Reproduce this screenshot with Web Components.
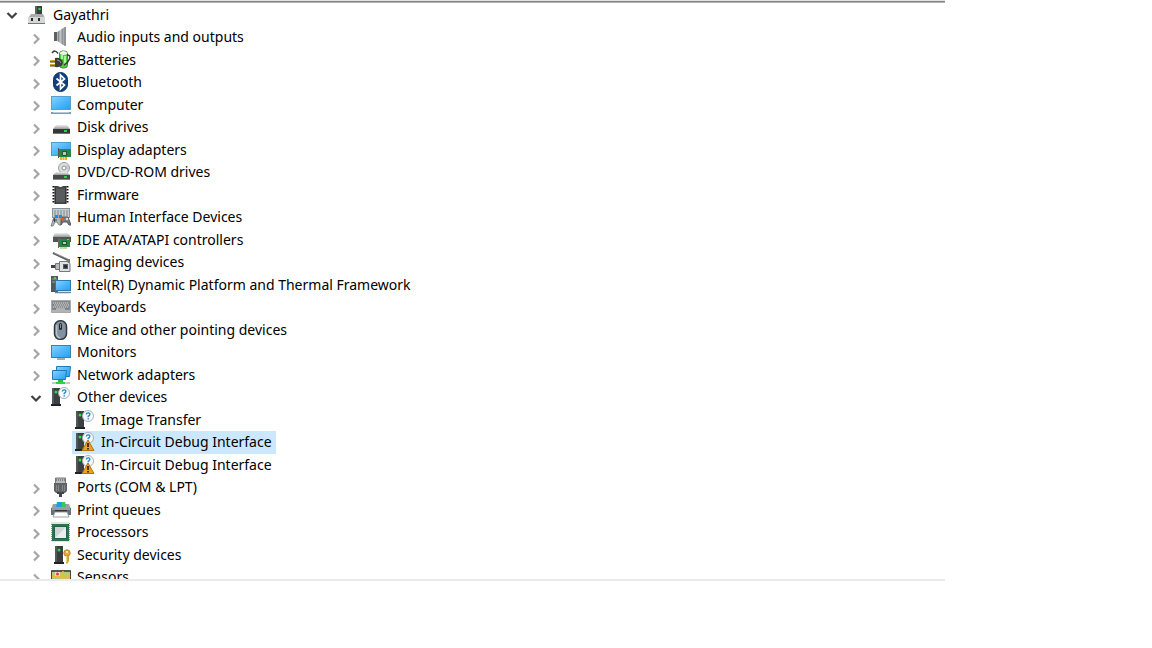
<!DOCTYPE html>
<html lang="en">
<head>
<meta charset="UTF-8">
<meta name="viewport" content="width=device-width, initial-scale=1">
<title>Device Manager</title>
<style>
  body {
    margin: 0;
    background: #fff;
    color: #000;
    font-family: "Noto Sans", "Open Sans", sans-serif;
    font-size: 14px;
  }
</style>
</head>
<body>

<device-tree>
  <device-row icon="root" level="0" open>Gayathri</device-row>
  <device-row icon="audio">Audio inputs and outputs</device-row>
  <device-row icon="battery">Batteries</device-row>
  <device-row icon="bluetooth">Bluetooth</device-row>
  <device-row icon="computer">Computer</device-row>
  <device-row icon="disk">Disk drives</device-row>
  <device-row icon="display">Display adapters</device-row>
  <device-row icon="dvd">DVD/CD-ROM drives</device-row>
  <device-row icon="firmware">Firmware</device-row>
  <device-row icon="hid">Human Interface Devices</device-row>
  <device-row icon="ide">IDE ATA/ATAPI controllers</device-row>
  <device-row icon="imaging">Imaging devices</device-row>
  <device-row icon="thermal">Intel(R) Dynamic Platform and Thermal Framework</device-row>
  <device-row icon="keyboard">Keyboards</device-row>
  <device-row icon="mouse">Mice and other pointing devices</device-row>
  <device-row icon="monitor">Monitors</device-row>
  <device-row icon="network">Network adapters</device-row>
  <device-row icon="other" open>Other devices</device-row>
  <device-row icon="other" level="2">Image Transfer</device-row>
  <device-row icon="warning" level="2" selected>In-Circuit Debug Interface</device-row>
  <device-row icon="warning" level="2">In-Circuit Debug Interface</device-row>
  <device-row icon="ports">Ports (COM &amp; LPT)</device-row>
  <device-row icon="printer">Print queues</device-row>
  <device-row icon="cpu">Processors</device-row>
  <device-row icon="security">Security devices</device-row>
  <device-row icon="sensors">Sensors</device-row>
</device-tree>

<script>
// shared pieces
const BLUE = `<linearGradient id="b" x2="1" y2="1"><stop stop-color="#8ad4ff"/><stop offset=".5" stop-color="#50b7fa"/><stop offset="1" stop-color="#289ff0"/></linearGradient>`;
const GREY = `<linearGradient id="g" x2="0" y2="1"><stop stop-color="#eee"/><stop offset="1" stop-color="#999"/></linearGradient>`;
const TOWER = `
  <path d="M2 1h8v16H2z" fill="#3d4043"/><path d="M2 1h2v16H2z" fill="#53575a"/>
  <path d="M1 17h10v2H1z" fill="#222"/><circle cx="6" cy="5" r="1.500" fill="#24e838"/>`;
const BUBBLE = `
  <circle cx="14" cy="6" r="5.500" fill="#f7fafc" stroke="#a9b0b5"/>
  <path d="M12.300 4.500q.2-1.800 2-1.700 1.900.2 1.500 1.900-.2 1-1.600 1.600v1" fill="none" stroke="#2082cc" stroke-width="1.300"/>
  <path d="M13.500 8.200H15v1.400h-1.500z" fill="#2082cc"/>`;

const ICONS = {
  root: `
    <path d="M9 1h7v9H9z" fill="#3b3f3d"/><path d="M9 1h2v9H9z" fill="#5d615f"/><circle cx="13.500" cy="4" r="1.300" fill="#28d83a"/>
    <path d="M5 9h12l2 4v6H2v-6z" fill="#a9abac"/><path d="M2 12h17v6H2z" fill="#d5d6d6"/><path d="M2 18h17v1H2z" fill="#777"/>
    <path d="M5 13h2v3H5zM12 13h2v3h-2z" fill="#2b2b2b"/>`,
  audio: `
    <defs><linearGradient id="a"><stop stop-color="#666"/><stop offset=".5" stop-color="#c8cacc"/><stop offset="1" stop-color="#85898c"/></linearGradient></defs>
    <path d="M4 5h3v9H4z" fill="#596066"/><path d="M7.500 5L13 1v17l-5.500-4z" fill="url(#a)"/>
    <path d="M13 1l3-1v19l-3-1z" fill="#a6abad"/><path d="M15 0v19" stroke="#777c80"/>`,
  battery: `
    <rect x="9.500" y="1" width="8" height="17" rx="3" fill="#42d52f" stroke="#637464"/>
    <path d="M10 4q3.500 2 7 0V2.500Q13.500-.5 10 2.500z" fill="#eef1ee"/><path d="M12 5v4M15 6v9" stroke="#a8f898" stroke-width="2"/>
    <path d="M2 3q3-4 6 .5M17 5q4 0 2.500 4T14 15" fill="none" stroke="#383838" stroke-width="1.500"/>
    <path d="M5 8q6-1 8 4.500-1 5.500-8 4.500z" fill="#3c3d36"/><path d="M7 10q3 0 4 3" fill="none" stroke="#999"/>
    <path d="M0 11h5M0 15h5" stroke="#d3a52b" stroke-width="2"/><path d="M0 12h5M0 16h5" stroke="#4b3b0b"/>`,
  bluetooth: `
    <rect x="3.500" y=".5" width="14" height="19" rx="7" fill="#143f7c" stroke="#0d3166"/>
    <path d="M6.500 6.500l8 6.500-4 4V3l4 4-8 6.500" fill="none" stroke="#fff" stroke-width="1.700"/>`,
  computer: `
    <defs>${BLUE}</defs><rect x="1.500" y="1.500" width="19" height="13" fill="url(#b)" stroke="#5a9fc9"/>
    <path d="M1 17h20v2H1z" fill="#7d9dac"/><path d="M3 17h16v1H3z" fill="#b4cad4"/>`,
  disk: `
    <defs>${GREY}</defs><path d="M6 8h11l3 4H3z" fill="url(#g)"/><path d="M3 12h17v5H3z" fill="#323835"/>
    <path d="M3 16h17v1H3z" fill="#777"/><path d="M14 13h3v2h-3z" fill="#22d450"/>`,
  display: `
    <defs>${BLUE}</defs><rect x="1.500" y="2.500" width="19" height="13" fill="url(#b)" stroke="#4f9dce"/>
    <path d="M8 9h13v8H8z" fill="#26864b"/><path d="M8.500 8v10" stroke="#555"/><path d="M12 11h5v5h-5z" fill="#275541"/>
    <path d="M13 12h3v3h-3z" fill="#aad6b6"/><path d="M10 17h7v3h-7z" fill="#f2ae18"/><path d="M12.500 17v3M14.500 17v3" stroke="#fff1b6" stroke-width=".6"/>`,
  dvd: `
    <defs>${GREY}</defs><circle cx="14" cy="6" r="5.500" fill="#dcdddd" stroke="#9ba0a1"/><path d="M14 6l4-4 1 6z" fill="#c2c9cc"/>
    <circle cx="14" cy="6" r="2" fill="#fff" stroke="#8e9293"/><path d="M6 10h11l3 3H3z" fill="url(#g)"/>
    <path d="M3 13h17v5H3z" fill="#464a48"/><path d="M3 17h17v1H3z" fill="#888"/><path d="M14 14h3v2h-3z" fill="#24ce4f"/>`,
  firmware: `
    <path d="M5 1h3q2.500 2 5 0h3v18H5z" fill="#45494a"/><path d="M6 3q4 2 9 0v14H6z" fill="#585c5e"/>
    <path d="M3.500 1v18M17.500 1v18" stroke="#151515" stroke-width="2" stroke-dasharray="1.500 1.500"/>
    <path d="M5 1v18M16 1v18" stroke="#222"/>`,
  hid: `
    <rect x="2.500" y="1.500" width="17" height="9" fill="#c8cdd0" stroke="#899096"/>
    <path d="M4 4h14M4 6h14M4 8h14" stroke="#7f878b" stroke-dasharray="2 1"/>
    <path d="M4 10h6l1 8H9l-2-3H5l-2 4H1z" fill="#b2b6b8" stroke="#7f8486"/>
    <path d="M12 10h6l3 8h-2l-2-3h-4l-2 3z" fill="#777b7e" stroke="#55595b"/>
    <path d="M4.500 11v4M3 13h4" stroke="#3b4345"/><path d="M5 8h3v3H5zM9 8h3v3H9z" fill="#168de8"/><circle cx="12" cy="12" r="1.500" fill="#e95b22"/>
    <circle cx="17" cy="12" r="1.300" fill="#d8dadb"/>`,
  ide: `
    <defs>${GREY}</defs><path d="M5 3h13l3 4H3z" fill="url(#g)"/><path d="M3 7h18v5H3z" fill="#515654"/>
    <path d="M8 9h12v8H8z" fill="#238745"/><path d="M8.500 8v10" stroke="#666"/><path d="M12 11h5v4h-5z" fill="#284d35"/>
    <path d="M13 12h3v2h-3z" fill="#aed8b2"/><path d="M10 17h7v2h-7z" fill="#cbd5a4"/><path d="M17 9h2v1h-2z" fill="#31ed5e"/>`,
  imaging: `
    <path d="M3 1l15 7" stroke="#555b5d" stroke-width="2"/><path d="M4 1l14 6" stroke="#bbb" stroke-width=".6"/>
    <path d="M17 7h3v4l-3-1z" fill="#777"/><path d="M1 13h5v3H1z" fill="#3e4547"/><path d="M5.500 11.500h5v6h-5z" fill="#bbb" stroke="#777"/>
    <path d="M9.500 9.500H17l3 2v8H9.500z" fill="#e0e1e1" stroke="#777"/><path d="M13 12h5v5h-5z" fill="#526268"/>
    <circle cx="15.500" cy="14.500" r="1.700" fill="#1f2c34"/>`,
  thermal: `
    <defs>${BLUE}</defs><path d="M1 1h7v16H1z" fill="#53595b"/><path d="M2 4h5M2 7h5" stroke="#99a1a3"/><path d="M4 2h2v2H4z" fill="#35df46"/>
    <rect x="5.500" y="5.500" width="15" height="10" fill="url(#b)" stroke="#2b79af"/><path d="M5 17.500h16" stroke="#6c8794" stroke-width="1.500"/>`,
  keyboard: `
    <path d="M1.500 3.500h19v12h-19z" fill="#85898c" stroke="#a6aaad"/><path d="M3 5h16v7H3z" fill="#787c7f"/>
    <path d="M3 6h16M4 8h15M3 10h16" stroke="#e6e8e9" stroke-dasharray="1.400 .6"/><path d="M2 13h18v2H2z" fill="#b1b4b7"/><path d="M6 12h9" stroke="#ddd"/>`,
  mouse: `
    <rect x="4.500" y=".8" width="12" height="18.500" rx="5.500" fill="#8290a0" stroke="#30363b" stroke-width="1.500"/>
    <path d="M6.500 5v9q1 4 4 4" fill="none" stroke="#b5c0ca" stroke-width="1.500"/>
    <rect x="9" y="3" width="3" height="7" rx="1.500" fill="#25292d"/><path d="M10.500 4v4" stroke="#818a90"/>`,
  monitor: `
    <defs>${BLUE}</defs><rect x="1.500" y="3.500" width="19" height="12" fill="url(#b)" stroke="#3a80ae"/><path d="M7 17h8" stroke="#a2abae" stroke-width="2"/>`,
  network: `
    <defs>${BLUE}</defs><path d="M6.500 1.500h14l-1 10h-13z" fill="url(#b)" stroke="#2679ac"/>
    <path d="M2.500 5.500h14l-1 9h-13z" fill="url(#b)" stroke="#2679ac"/><path d="M2 18h18" stroke="#c3cbc8" stroke-width="2"/>
    <path d="M8 15h5v3H8z" fill="#34bb43"/><path d="M6 17h9v2H6z" fill="#35cf46"/>`,
  other: TOWER + BUBBLE,
  warning: TOWER + BUBBLE + `
    <path d="M14 8l6 10.500H8z" fill="#f0a020" stroke="#b3720f" stroke-linejoin="round"/>
    <path d="M13.200 11h1.600v4h-1.600zM13.200 16h1.600v1.500h-1.600z" fill="#261b08"/>`,
  ports: `
    <path d="M5.500 1h10v6h-10z" fill="#b9bcbe" stroke="#737779"/><path d="M6 3h9" stroke="#444" stroke-dasharray="1 1"/>
    <path d="M4 6h13v8l-2 2H6l-2-2z" fill="#606467"/><path d="M6.500 8v6M8.500 8v6M12.500 8v6M14.500 8v6" stroke="#85898b"/><path d="M7 15h7v2H7zM9 17h3v3H9z" fill="#444"/>`,
  printer: `
    <path d="M3 4h16l2 5H1z" fill="#9aa0a4"/><path d="M7 2h8l1 5H6z" fill="#1e9fe0"/><path d="M12 2h3l1 5h-4z" fill="#39c957"/>
    <path d="M1 8h20v7H1z" fill="#6a7176"/><path d="M2 9h18" stroke="#c5cacc"/><path d="M5 10h12v2H5z" fill="#30373b"/>
    <path d="M5 12h12l2 5H3z" fill="#fff" stroke="#9da3a6"/>`,
  cpu: `
    <rect x="1.500" y="1" width="18" height="18" fill="none" stroke="#a69855" stroke-dasharray="1 1"/>
    <rect x="2" y="2" width="17" height="17" fill="#246349"/><rect x="3" y="3" width="15" height="15" fill="none" stroke="#3b8063"/>
    <path d="M5 5h11v11H5z" fill="#cfd4d4"/><path d="M5 16L16 5v11z" fill="#e9eded"/>`,
  security: `
    <path d="M5 1h8v16H5z" fill="#3a3d40"/><path d="M5 1h2v16H5z" fill="#54585b"/><path d="M4 17h10v2H4z" fill="#222"/><circle cx="9" cy="5" r="1.500" fill="#28dd37"/>
    <circle cx="17" cy="8" r="3.200" fill="#e4ac40" stroke="#ba862c"/><path d="M16 11h3v5l-2 3-1-1z" fill="#daa13a"/><circle cx="17" cy="7" r="1" fill="#fff5d6"/>
    <path d="M16.500 11v6" stroke="#fad57b"/>`,
  sensors: `
    <path d="M1.500 3.500h19v14h-19z" fill="#b8ca77" stroke="#444"/><path d="M2 4h18" stroke="#555" stroke-width="2"/>
    <path d="M2 10q5-2 8 0t10-1M13 4v12" fill="none" stroke="#f5b735" stroke-width="1.500"/><path d="M5 5h5v4H5z" fill="#f2d5bd"/><circle cx="7.500" cy="7" r="1.500" fill="#e34145"/>`
};

class DeviceTree extends HTMLElement {
  constructor() {
    super();
    this.attachShadow({ mode: "open" });
  }

  connectedCallback() {
    this.setAttribute("role", "tree");
    this.shadowRoot.innerHTML = `
      <style>
        :host {
          display: block;
          box-sizing: border-box;
          width: 82%;
          height: calc(100vh - 67px);
          overflow: hidden;
          border-bottom: 2px solid #ebebeb;
        }

        .edge {
          height: 1px;
          background: #848685;
          border-top: 1px solid #e2e4e3;
          border-bottom: 1px solid #b0b2b1;
          margin-bottom: 1px;
        }

        /* rows alternate between 22px and 23px */
        ::slotted(device-row) { height: 22px; }
        ::slotted(device-row:nth-child(even)) { height: 23px; }
      </style>
      <div class="edge"></div>
      <slot></slot>
    `;
  }
}

class DeviceRow extends HTMLElement {
  constructor() {
    super();
    this.attachShadow({ mode: "open" });
  }

  connectedCallback() {
    const level = Number(this.getAttribute("level") ?? 1);
    this.setAttribute("role", "treeitem");
    this.setAttribute("aria-level", level + 1);
    this.style.setProperty("--level", level);

    this.shadowRoot.innerHTML = `
      <style>
        :host {
          display: flex;
          box-sizing: border-box;
          padding-left: calc(var(--level) * 24px);
          line-height: 22px;
          white-space: nowrap;
        }

        .toggle {
          display: flex;
          align-items: center;
          justify-content: center;
          flex: 0 0 24px;
          padding: 0;
          border: 0;
          background: none;
        }

        .toggle svg {
          width: 14px;
          height: 14px;
          fill: none;
          stroke: #a6a6a6;
          stroke-width: 2.2;
        }

        .toggle .down { display: none; }
        :host([open]) .toggle .down { display: inline; stroke: #404040; }
        :host([open]) .toggle .right { display: none; }

        .gap { flex: 0 0 24px; }

        .label {
          display: flex;
          align-items: flex-start;
          gap: 6px;
          padding: 0 4px 0 2px;
        }

        :host([selected]) .label { background: #cce8ff; }

        .icon {
          flex: none;
          width: 21px;
          height: 20px;
          margin-top: 1px;
        }
      </style>
      ${level < 2 ? this.renderToggle() : `<span class="gap"></span>`}
      <span class="label">
        <svg class="icon" viewBox="0 0 21 20" aria-hidden="true">${ICONS[this.getAttribute("icon")]}</svg>
        <span><slot></slot></span>
      </span>
    `;

    const toggle = this.shadowRoot.querySelector(".toggle");
    if (toggle) {
      toggle.addEventListener("click", () => this.toggleAttribute("open"));
    }
  }

  renderToggle() {
    return `
      <button class="toggle" type="button" aria-label="Toggle ${this.textContent}">
        <svg viewBox="0 0 14 14">
          <path class="right" d="M5 3.500l4.500 4.500L5 12.500"/>
          <path class="down" d="M2.500 5l4.500 4.500L11.500 5"/>
        </svg>
      </button>`;
  }
}

customElements.define("device-tree", DeviceTree);
customElements.define("device-row", DeviceRow);
</script>
</body>
</html>
